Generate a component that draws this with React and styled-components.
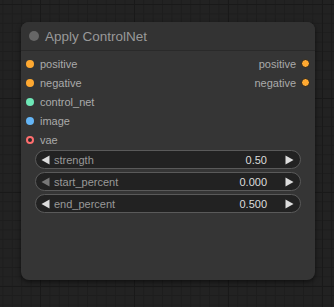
import React from 'react'
import styled, { createGlobalStyle } from 'styled-components'

const GlobalStyle = createGlobalStyle`
  html, body {
    margin: 0;
    padding: 0;
    height: 100%;
  }
  body {
    background-color: #222222;
    background-image:
      linear-gradient(to right, #191919 1px, transparent 1px),
      linear-gradient(to bottom, #191919 1px, transparent 1px),
      linear-gradient(to right, #1d1d1d 1px, transparent 1px),
      linear-gradient(to bottom, #1d1d1d 1px, transparent 1px);
    background-size: 94px 94px, 94px 94px, 9.4px 9.4px, 9.4px 9.4px;
    background-position: 40px 4px, 40px 4px, 40px 4px, 40px 4px;
    font-family: "Liberation Sans", Arial, sans-serif;
    overflow: hidden;
  }
`

const Canvas = styled.div`
  padding: 22px 0 0 21px;
`

const Node = styled.div`
  width: 294px;
  height: 258px;
  background: #353535;
  border-radius: 8px;
  box-shadow: 0 2px 5px rgba(0, 0, 0, 0.55);
  overflow: hidden;
`

const Title = styled.div`
  display: flex;
  align-items: center;
  height: 28px;
  padding-left: 8px;
  gap: 6px;
  background: #333333;
  border-bottom: 1px solid #2a2a2a;
  color: #999999;
  font-size: 13.5px;
`

const TitleDot = styled.span`
  width: 10px;
  height: 10px;
  border-radius: 50%;
  background: #666666;
`

const Slots = styled.div`
  display: grid;
  grid-template-columns: 1fr auto;
  padding: 3px 5px 1px;
`

const Column = styled.div`
  display: flex;
  flex-direction: column;
`

const Slot = styled.div`
  display: flex;
  align-items: center;
  justify-content: ${p => (p.$out ? 'flex-end' : 'flex-start')};
  gap: ${p => (p.$out ? '5px' : '6px')};
  height: 19px;
  font-size: 11px;
  color: #aaaaaa;
`

const Dot = styled.span`
  box-sizing: border-box;
  width: 8px;
  height: 8px;
  border-radius: 50%;
  background: ${p => (p.$ring ? '#2a2a2a' : p.$color)};
  border: ${p =>
    p.$ring ? `2px solid ${p.$color}` : p.$out ? '1px solid #1e1e1e' : 'none'};
  ${p => (p.$out ? 'width: 9px; height: 9px;' : '')}
`

const Widgets = styled.div`
  display: flex;
  flex-direction: column;
  gap: 3px;
  padding: 0 14px;
`

const Widget = styled.div`
  display: flex;
  align-items: center;
  height: 19px;
  box-sizing: border-box;
  border: 1px solid #5a5a5a;
  border-radius: 10px;
  background: #222222;
  padding: 0 6px 0 5px;
  font-size: 11px;
`

const Label = styled.span`
  flex: 1;
  margin-left: 4px;
  color: #999999;
`

const Value = styled.span`
  color: #dddddd;
  margin-right: 18px;
`

const Arrow = ({ dir, dim }) => (
  <svg width="9" height="10" viewBox="0 0 9 10" style={{ display: 'block' }}>
    <polygon
      points={dir === 'left' ? '8.5,0.5 8.5,9.5 0.5,5' : '0.5,0.5 0.5,9.5 8.5,5'}
      fill={dim ? '#777777' : '#dddddd'}
    />
  </svg>
)

const inputs = [
  { name: 'positive', color: '#FFA931' },
  { name: 'negative', color: '#FFA931' },
  { name: 'control_net', color: '#6EE7B7' },
  { name: 'image', color: '#64B5F6' },
  { name: 'vae', color: '#FF6E6E', ring: true },
]

const outputs = [
  { name: 'positive', color: '#FFA931' },
  { name: 'negative', color: '#FFA931' },
]

const widgets = [
  { name: 'strength', value: '0.50' },
  { name: 'start_percent', value: '0.000', atMin: true },
  { name: 'end_percent', value: '0.500' },
]

export default function App() {
  return (
    <>
      <GlobalStyle />
      <Canvas>
        <Node>
          <Title>
            <TitleDot />
            Apply ControlNet
          </Title>
          <Slots>
            <Column>
              {inputs.map(s => (
                <Slot key={s.name}>
                  <Dot $color={s.color} $ring={s.ring} />
                  {s.name}
                </Slot>
              ))}
            </Column>
            <Column>
              {outputs.map(s => (
                <Slot key={s.name} $out>
                  {s.name}
                  <Dot $color={s.color} $out />
                </Slot>
              ))}
            </Column>
          </Slots>
          <Widgets>
            {widgets.map(w => (
              <Widget key={w.name}>
                <Arrow dir="left" dim={w.atMin} />
                <Label>{w.name}</Label>
                <Value>{w.value}</Value>
                <Arrow dir="right" />
              </Widget>
            ))}
          </Widgets>
        </Node>
      </Canvas>
    </>
  )
}
